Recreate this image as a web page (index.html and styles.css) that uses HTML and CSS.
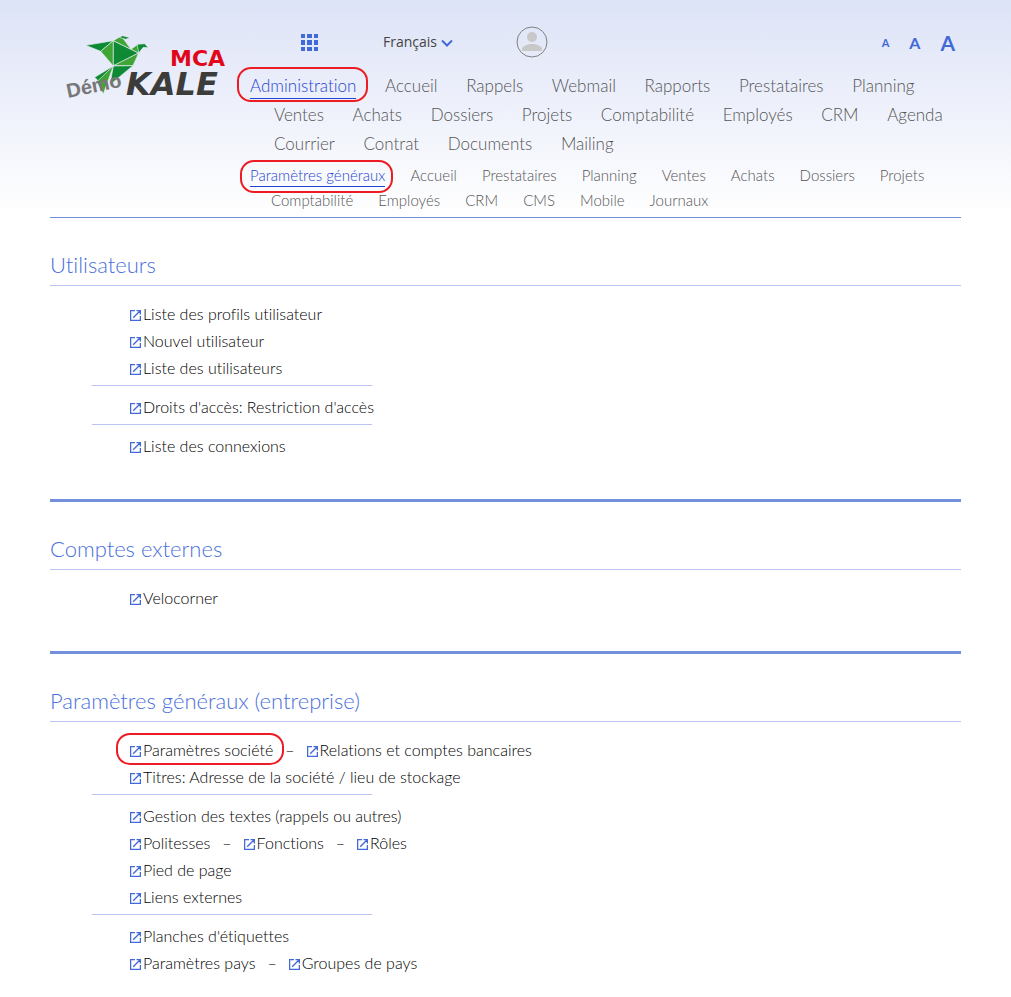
FILE: index.html
```html
<!DOCTYPE html>
<html lang="fr">
<head>
  <meta charset="UTF-8">
  <meta name="viewport" content="width=device-width, initial-scale=1.0">
  <title>Paramètres généraux</title>
  <link rel="stylesheet" href="styles.css">
</head>
<body>
  <!-- icon used in front of every link -->
  <svg class="sprite" width="0" height="0">
    <symbol id="ext" viewBox="0 0 11 11">
      <path d="M5 .6H.6v9.8h9.8V6M6.5 .6h3.9v3.9M10.2.8L3.2 7.8" fill="none" stroke="#4169d8" stroke-width="1.3"/>
    </symbol>
  </svg>

  <header class="header">
    <a href="#" class="logo" aria-label="MCA KALE">
      <svg width="185" height="90" viewBox="0 0 185 90">
        <g transform="scale(.3333)" stroke="#e6eaf8" stroke-width="2" stroke-linejoin="round">
          <path d="M107 76L190 62L152 94Z" fill="#0f8a34"/>
          <path d="M152 94L190 62V138Z" fill="#3fa535"/>
          <path d="M190 62L266 99L190 138Z" fill="#0f8a34"/>
          <path d="M190 62L214 48L243 88Z" fill="#3fa535"/>
          <path d="M208 52L218 47L240 53L227 58Z" fill="#0f8a34"/>
          <path d="M243 88L266 71L274 76L266 99Z" fill="#3fa535"/>
          <path d="M262 73L284 71L295 83L280 82L266 99Z" fill="#0f8a34"/>
          <path d="M266 99L249 137H190Z" fill="#3fa535"/>
          <path d="M190 138L249 137L180 194Z" fill="#0f8a34"/>
          <path d="M190 138L134 172L152 190Z" fill="#0f8a34"/>
          <path d="M190 138L160 222L140 186Z" fill="#3fa535"/>
        </g>
        <text class="logo-demo" x="18" y="78" transform="rotate(-12 18 78)">Démo</text>
        <text class="logo-mca" x="120" y="46">MCA</text>
        <text class="logo-kale" x="76" y="75">KALE</text>
      </svg>
    </a>

    <div class="header-main">
      <div class="toolbar">
        <button type="button" class="icon-btn" aria-label="Applications">
          <svg width="17" height="17" viewBox="0 0 17 17" fill="#4169d8">
            <path d="M0 0h4v4H0zM6 0h5v4H6zM13 0h4v4h-4zM0 6h4v5H0zM6 6h5v5H6zM13 6h4v5h-4zM0 13h4v4H0zM6 13h5v4H6zM13 13h4v4h-4z"/>
          </svg>
        </button>
        <button type="button" class="lang">Français
          <svg width="12" height="8" viewBox="0 0 12 8"><path d="M1 1.5l5 5 5-5" fill="none" stroke="#4169d8" stroke-width="2"/></svg>
        </button>
        <button type="button" class="icon-btn" aria-label="Profil">
          <svg width="32" height="32" viewBox="0 0 32 32">
            <circle cx="16" cy="16" r="15" fill="none" stroke="#808080"/>
            <circle cx="16" cy="11" r="5" fill="#c8c8c8"/>
            <path d="M6 25v-2c0-3 6-5 10-5s10 2 10 5v2z" fill="#c8c8c8"/>
          </svg>
        </button>
        <div class="sizes">
          <button type="button" class="size-s">A</button>
          <button type="button" class="size-m">A</button>
          <button type="button" class="size-l">A</button>
        </div>
      </div>

      <nav class="menu">
        <a href="#" class="active">Administration</a>
        <a href="#">Accueil</a>
        <a href="#">Rappels</a>
        <a href="#">Webmail</a>
        <a href="#">Rapports</a>
        <a href="#">Prestataires</a>
        <a href="#">Planning</a>
        <a href="#">Ventes</a>
        <a href="#">Achats</a>
        <a href="#">Dossiers</a>
        <a href="#">Projets</a>
        <a href="#">Comptabilité</a>
        <a href="#">Employés</a>
        <a href="#">CRM</a>
        <a href="#">Agenda</a>
        <a href="#">Courrier</a>
        <a href="#">Contrat</a>
        <a href="#">Documents</a>
        <a href="#">Mailing</a>
      </nav>
      <nav class="menu submenu">
        <a href="#" class="active">Paramètres généraux</a>
        <a href="#">Accueil</a>
        <a href="#">Prestataires</a>
        <a href="#">Planning</a>
        <a href="#">Ventes</a>
        <a href="#">Achats</a>
        <a href="#">Dossiers</a>
        <a href="#">Projets</a>
        <a href="#">Comptabilité</a>
        <a href="#">Employés</a>
        <a href="#">CRM</a>
        <a href="#">CMS</a>
        <a href="#">Mobile</a>
        <a href="#">Journaux</a>
      </nav>
    </div>
  </header>

  <main>
    <section>
      <h2>Utilisateurs</h2>
      <ul class="links">
        <li><a href="#"><svg><use href="#ext"/></svg>Liste des profils utilisateur</a></li>
        <li><a href="#"><svg><use href="#ext"/></svg>Nouvel utilisateur</a></li>
        <li><a href="#"><svg><use href="#ext"/></svg>Liste des utilisateurs</a></li>
        <li class="sep"><a href="#"><svg><use href="#ext"/></svg>Droits d'accès: Restriction d'accès</a></li>
        <li class="sep"><a href="#"><svg><use href="#ext"/></svg>Liste des connexions</a></li>
      </ul>
    </section>

    <section>
      <h2>Comptes externes</h2>
      <ul class="links">
        <li><a href="#"><svg><use href="#ext"/></svg>Velocorner</a></li>
      </ul>
    </section>

    <section>
      <h2>Paramètres généraux (entreprise)</h2>
      <ul class="links">
        <li><a href="#" class="marked"><svg><use href="#ext"/></svg>Paramètres société</a><span class="dash">–</span><a href="#"><svg><use href="#ext"/></svg>Relations et comptes bancaires</a></li>
        <li><a href="#"><svg><use href="#ext"/></svg>Titres: Adresse de la société / lieu de stockage</a></li>
        <li class="sep"><a href="#"><svg><use href="#ext"/></svg>Gestion des textes (rappels ou autres)</a></li>
        <li><a href="#"><svg><use href="#ext"/></svg>Politesses</a><span class="dash">–</span><a href="#"><svg><use href="#ext"/></svg>Fonctions</a><span class="dash">–</span><a href="#"><svg><use href="#ext"/></svg>Rôles</a></li>
        <li><a href="#"><svg><use href="#ext"/></svg>Pied de page</a></li>
        <li><a href="#"><svg><use href="#ext"/></svg>Liens externes</a></li>
        <li class="sep"><a href="#"><svg><use href="#ext"/></svg>Planches d'étiquettes</a></li>
        <li><a href="#"><svg><use href="#ext"/></svg>Paramètres pays</a><span class="dash">–</span><a href="#"><svg><use href="#ext"/></svg>Groupes de pays</a></li>
      </ul>
    </section>
  </main>
</body>
</html>
```
FILE: styles.css
```css
* {
  box-sizing: border-box;
}
body {
  margin: 0;
  padding: 0 50px;
  font-family: Lato, "Open Sans", sans-serif;
  font-size: 17px;
  font-weight: 300;
  font-variant-ligatures: none;
  color: #000;
  background: #fff linear-gradient(#dde3f7, #fff 215px) no-repeat;
}
a {
  color: inherit;
  text-decoration: none;
}
button {
  padding: 0;
  border: 0;
  background: none;
  font-family: inherit;
  color: #4169d8;
  cursor: pointer;
}
.sprite {
  position: absolute;
}

/* header */
.header {
  display: flex;
  align-items: flex-start;
  padding: 20px 0 4px;
  border-bottom: 1px solid #7390dc;
}
.logo {
  flex: none;
}
.logo svg {
  display: block;
}
.logo-demo {
  font: bold 20px "Liberation Sans", sans-serif;
  fill: #777;
}
.logo-mca {
  font: bold 22px "DejaVu Sans", sans-serif;
  fill: #e2061c;
}
.logo-kale {
  font: italic bold 32px "DejaVu Sans", sans-serif;
  fill: #3c3c3b;
}
.header-main {
  flex: 1;
}
.toolbar {
  display: flex;
  align-items: center;
  height: 44px;
  padding: 0 6px 0 66px;
  margin-bottom: 7px;
}
.icon-btn svg {
  display: block;
}
.lang {
  margin: 0 63px 2px 65px;
  font: 14px "Open Sans", sans-serif;
  color: #444;
}
.sizes {
  display: flex;
  align-items: center;
  gap: 20px;
  margin-left: auto;
}
.sizes button {
  font-weight: bold;
}
.size-s {
  font-size: 11px;
}
.size-m {
  font-size: 16px;
}
.size-l {
  font-size: 21px;
}
.menu {
  margin-right: -24px;
  padding-left: 39px;
  text-indent: -24px;
  line-height: 29px;
  color: #555;
}
.menu a {
  position: relative;
  display: inline-block;
  margin-right: 24px;
  text-indent: 0;
}
.menu .active {
  color: #1f45d0;
}
.menu .active::before {
  content: "";
  position: absolute;
  left: 0;
  right: 0;
  bottom: 1px;
  border-bottom: 1px solid #1f45d0;
}
/* red frame around the entry to click */
.menu .active::after,
.marked::after {
  content: "";
  position: absolute;
  inset: -4px -12px -2px -13px;
  border: 2px solid #ed1c24;
  border-radius: 14px;
}
.submenu {
  padding-left: 36px;
  padding-top: 5px;
  text-indent: -21px;
  font-size: 15px;
  line-height: 25px;
}
.submenu a {
  margin-right: 21px;
}
.submenu .active::after {
  inset: -3px -8px -5px -10px;
}

/* sections */
section {
  padding: 32px 0 40px;
  border-bottom: 3px solid #7390dc;
}
section:last-child {
  padding-bottom: 16px;
  border-bottom: 0;
}
h2 {
  margin: 0 0 14px;
  padding-bottom: 5px;
  border-bottom: 1px solid #b9c5ee;
  font-size: 22px;
  font-weight: 300;
  line-height: 30px;
  color: #4a70dc;
}
.links {
  margin: 0;
  padding: 0 0 0 80px;
  list-style: none;
  font-size: 16px;
  line-height: 27px;
}
.sep::before {
  content: "";
  display: block;
  width: 280px;
  margin: 4px 0 7px -38px;
  border-top: 1px solid #b9c5ee;
}
.links svg {
  width: 11px;
  height: 11px;
  margin-right: 2px;
  vertical-align: -1px;
}
.dash {
  margin: 0 12px;
}
.marked {
  position: relative;
}
.marked::after {
  inset: -7px -11px -6px -14px;
}
```
